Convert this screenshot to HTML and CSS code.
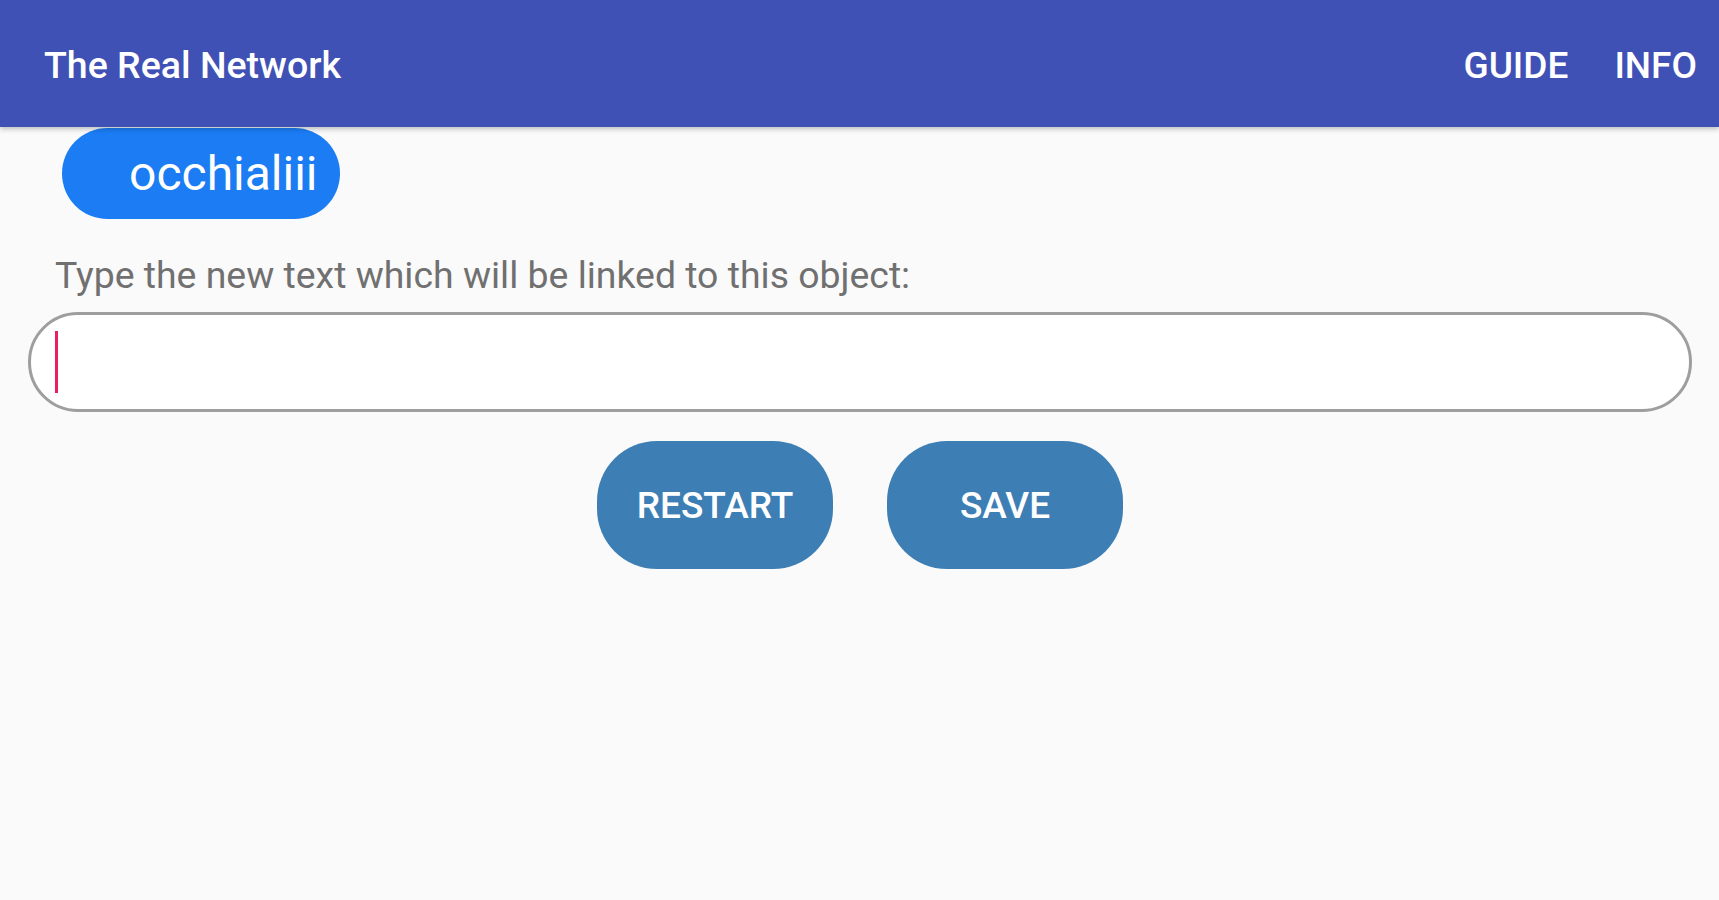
FILE: index.html
```html
<!DOCTYPE html>
<html lang="en">
<head>
<meta charset="utf-8">
<title>The Real Network</title>
<link rel="stylesheet" href="styles.css">
</head>
<body>
<header class="appbar">
  <div class="appbar-title">The Real Network</div>
  <nav class="appbar-actions">
    <span class="action">GUIDE</span>
    <span class="action">INFO</span>
  </nav>
</header>
<main class="content">
  <div class="chip">occhialiii</div>
  <p class="label">Type the new text which will be linked to this object:</p>
  <div class="field"><span class="caret"></span></div>
  <div class="buttons">
    <button class="btn">RESTART</button>
    <button class="btn">SAVE</button>
  </div>
</main>
</body>
</html>
```
FILE: styles.css
```css
html, body {
  margin: 0;
  padding: 0;
  background: #fafafa;
  font-family: Roboto, "Noto Sans", sans-serif;
}

.appbar {
  position: relative;
  z-index: 2;
  height: 127px;
  background: #3f51b5;
  display: flex;
  align-items: center;
  justify-content: space-between;
  padding: 0 22px 0 44px;
  box-shadow: 0 2px 5px rgba(0, 0, 0, 0.25);
  color: #ffffff;
}

.appbar-title {
  font-size: 37.5px;
  font-weight: 500;
  padding-top: 3px;
}

.appbar-actions {
  display: flex;
  gap: 46px;
  padding-top: 3px;
}

.action {
  font-size: 37px;
  font-weight: 500;
}

.content {
  display: flex;
  flex-direction: column;
  padding: 1px 27px 0 28px;
}

.chip {
  align-self: flex-start;
  margin-left: 34px;
  height: 91px;
  box-sizing: border-box;
  padding: 0 22px 0 67px;
  border-radius: 46px;
  background: #1b7cf4;
  color: #ffffff;
  font-size: 48px;
  display: flex;
  align-items: center;
}

.label {
  margin: 33px 0 0 27px;
  font-size: 37.4px;
  line-height: 46px;
  color: #707070;
}

.field {
  margin-top: 14px;
  height: 100px;
  box-sizing: border-box;
  border: 3px solid #9e9e9e;
  border-radius: 50px;
  background: #ffffff;
  display: flex;
  align-items: center;
  padding-left: 24px;
}

.caret {
  width: 3px;
  height: 62px;
  background: #e91e63;
}

.buttons {
  display: flex;
  justify-content: center;
  gap: 54px;
  margin-top: 29px;
}

.btn {
  width: 236px;
  height: 128px;
  border: none;
  border-radius: 60px;
  background: #3d7fb5;
  color: #ffffff;
  font-family: Roboto, "Noto Sans", sans-serif;
  font-size: 37px;
  font-weight: 500;
  padding: 0;
}
```
